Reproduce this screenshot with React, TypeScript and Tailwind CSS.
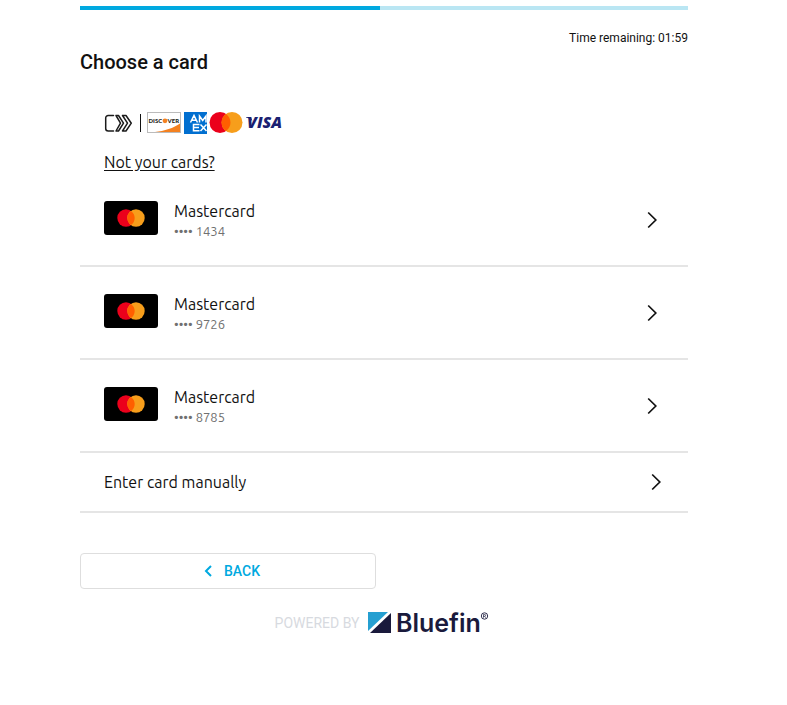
import React from 'react'

interface CardProps {
    brand: string;
    digits: string;
}

const cards: CardProps[] = [
    { brand: 'Mastercard', digits: '1434' },
    { brand: 'Mastercard', digits: '9726' },
    { brand: 'Mastercard', digits: '8785' },
]

const ChevronRight = () => (
    <svg className="w-[10px] h-[18px] shrink-0" viewBox="0 0 10 18" fill="none" stroke="#111" strokeWidth="1.7" aria-hidden="true">
        <path d="M1.2 1.5L8.8 9L1.2 16.5" />
    </svg>
)

const MastercardArt = () => (
    <svg className="w-[54px] h-[34px] shrink-0" viewBox="0 0 54 34" aria-hidden="true">
        <rect width="54" height="34" rx="3" fill="#000" />
        <circle cx="22" cy="17" r="8.7" fill="#eb001b" />
        <circle cx="32" cy="17" r="8.7" fill="#f79e1b" />
        <path d="M27 9.9a8.7 8.7 0 0 1 0 14.2a8.7 8.7 0 0 1 0-14.2z" fill="#ff5f00" />
    </svg>
)

const NetworkLogos = () => (
    <svg className="w-[180px] h-6" viewBox="0 0 180 24" role="img" aria-label="Click to Pay with Discover, Amex, Mastercard and Visa">
        {/* click to pay */}
        <g fill="none" stroke="#1b1b1b" strokeWidth="1.5" strokeLinejoin="round" strokeLinecap="round">
            <path d="M10 4.5H4.2a2.5 2.5 0 0 0-2.5 2.5v10.5a2.5 2.5 0 0 0 2.5 2.5H10L15.500 12.200z" stroke="none" />
            <path d="M9.5 4.5H4.2a2.5 2.5 0 0 0-2.5 2.5v10.5a2.5 2.5 0 0 0 2.5 2.5H9.5" />
            <path d="M12 4.5H14.5L19.5 12.2L14.5 20H12L16.500 12.200z" />
            <path d="M18.500 4.5H22L27.300 12.200L22 20H18.500L23.500 12.200z" />
        </g>
        <path d="M36.5 3v18" stroke="#111" />
        {/* discover */}
        <rect x="43.5" y="1.5" width="33" height="20" fill="#fff" stroke="#bbb" />
        <path d="M51 21C60 20 70 17 76 12.5V21z" fill="#f48120" />
        <text x="44.5" y="12" fontSize="6" fontWeight="900" fill="#231f20" className="font-['Lato',sans-serif]">DISC</text>
        <circle cx="61" cy="9.8" r="2.4" fill="#f48120" />
        <text x="63.5" y="12" fontSize="6" fontWeight="900" fill="#231f20" className="font-['Lato',sans-serif]">VER</text>
        {/* amex */}
        <rect x="80" y="1" width="23" height="22" fill="#016fd0" />
        <g fill="none" stroke="#fff" strokeWidth="1.5">
            <path d="M86.5 11.5L90 4.5L93.5 11.5M88 9.3h4M95.5 11.5V5l3.2 4.5L102 5v6.5" />
            <path d="M95.5 13.5H89.5v6.2h6M90 16.6h5M96.5 13.5l6 6.5M102.5 13.5l-6 6.5" />
        </g>
        {/* mastercard */}
        <circle cx="116" cy="11.5" r="10.5" fill="#eb001b" />
        <circle cx="128" cy="11.5" r="10.5" fill="#f79e1b" />
        <path d="M122 2.9a10.5 10.5 0 0 1 0 17.2a10.5 10.5 0 0 1 0-17.2z" fill="#ff5f00" />
        {/* visa */}
        <path d="M142 6h5l1.5 4.5C147 8.5 145 7 142 6.5z" fill="#1a1f71" />
        <text x="143" y="17" fontSize="16" fontWeight="800" fontStyle="italic" fill="#1a1f71" className="font-['Open_Sans',sans-serif]">VISA</text>
    </svg>
)

const BluefinLogo = () => (
    <svg className="w-[121px] h-9" viewBox="0 -6 121 36" role="img" aria-label="Bluefin">
        <path d="M0 1h20L0 20z" fill="#259fd1" />
        <path d="M23 2v20H2z" fill="#1a1a3c" />
        <text x="28" y="21" fontSize="25" fontWeight="600" fill="#1a1a3c" className="font-['Inter',sans-serif]">Bluefin</text>
        <circle cx="116.5" cy="5" r="3.2" fill="none" stroke="#1a1a3c" strokeWidth="0.9" />
        <path d="M115.5 6.7V3.5h1.2a.9.9 0 0 1 0 1.8h-1.2M116.7 5.3l.9 1.4" fill="none" stroke="#1a1a3c" strokeWidth="0.7" />
    </svg>
)

const CardRow = ({ brand, digits }: CardProps) => {
    return (
        <li className="border-b-2 border-[#e5e5e5]">
            <button className="w-full flex items-center justify-between pl-6 pr-[31px] text-left">
                <span className="flex gap-4 pt-[27px] pb-6">
                    <MastercardArt />
                    <span className="flex flex-col">
                        <span className="text-base leading-5 text-[#111]">{brand}</span>
                        <span className="text-[13px] leading-5 text-[#707070]">•••• {digits}</span>
                    </span>
                </span>
                <ChevronRight />
            </button>
        </li>
    )
}

const App = () => {
    return (
        <main className="pl-20 pr-[99px] pt-[6px] pb-16 bg-white font-['Roboto',sans-serif]">
            <div className="flex h-1 bg-[#bae6f3]">
                <div className="w-[49.3%] bg-[#00a9e0]" />
            </div>
            <p className="mt-5 text-right text-xs leading-4 text-[#111]">Time remaining: 01:59</p>
            <h1 className="mt-1 text-xl leading-6 font-medium text-[#111]">Choose a card</h1>

            <section className="mt-[37px] font-['Ubuntu','Noto_Sans',sans-serif]">
                <div className="px-6">
                    <NetworkLogos />
                    <a href="#" className="mt-[15px] inline-block text-base leading-6 text-[#111] underline underline-offset-2">Not your cards?</a>
                </div>
                <ul>
                    {cards.map((card) => (
                        <CardRow key={card.digits} brand={card.brand} digits={card.digits} />
                    ))}
                </ul>
                <button className="w-full h-15 flex items-center justify-between pl-6 pr-[27px] border-b-2 border-[#e5e5e5] text-base leading-6 text-[#111]">
                    Enter card manually
                    <ChevronRight />
                </button>
            </section>

            <div className="mt-10 grid grid-cols-2 gap-4">
                <button className="h-9 flex items-center justify-center gap-3 pl-2 rounded border border-[#dedede] text-sm font-medium text-[#00a9e0]">
                    <svg className="w-2 h-3" viewBox="0 0 8 12" fill="none" stroke="currentColor" strokeWidth="2" aria-hidden="true">
                        <path d="M7 1L2 6L7 11" />
                    </svg>
                    BACK
                </button>
            </div>

            <footer className="mt-4 pr-1 flex items-center justify-center gap-[9px] text-sm text-[#d7dae0]">
                POWERED BY
                <BluefinLogo />
            </footer>
        </main>
    )
}

export default App
